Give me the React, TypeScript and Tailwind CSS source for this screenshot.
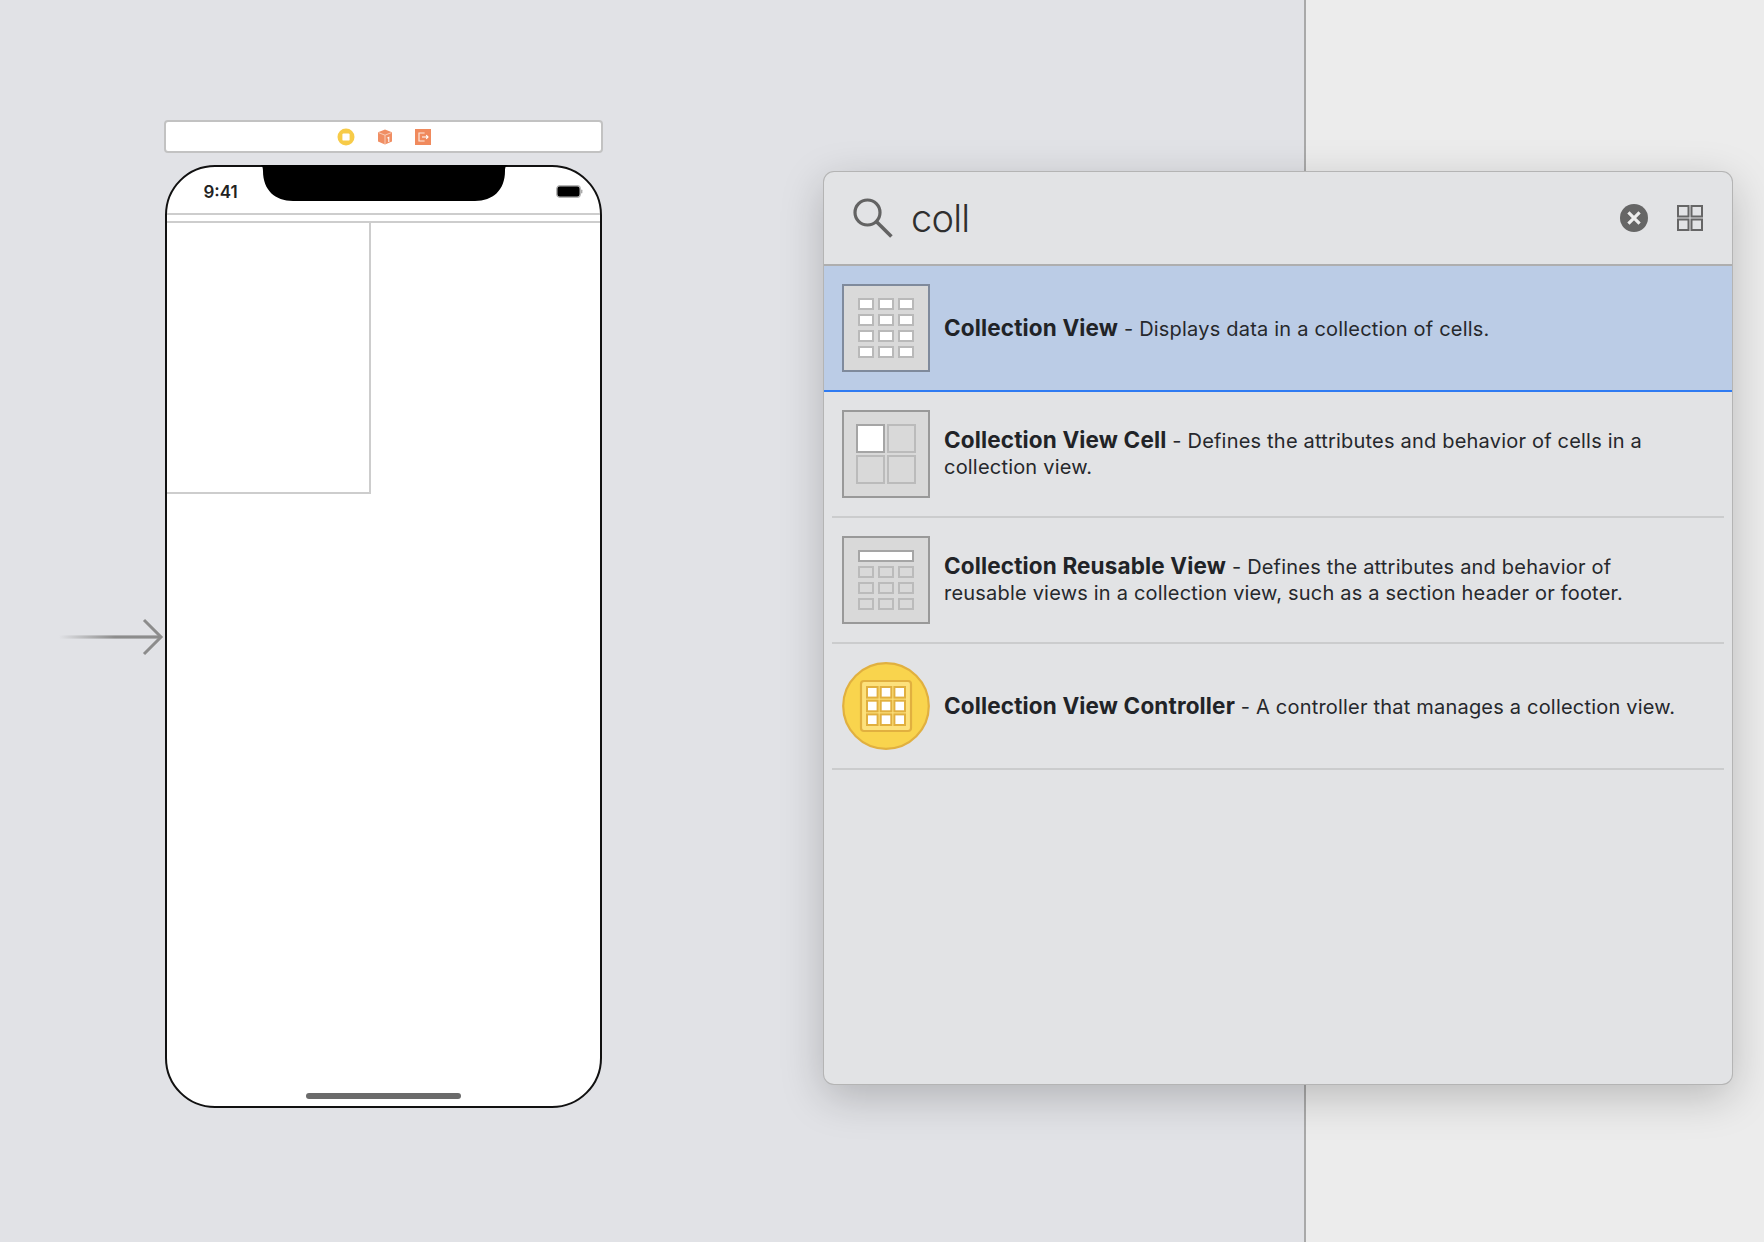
const CELL_X = [16, 36, 56];
const CELL_Y = [14, 30, 46, 62];

// Xcode library thumbnails
function CollectionViewIcon({ border }: { border: string }) {
  return (
    <svg width="88" height="88" viewBox="0 0 88 88" className="shrink-0">
      <rect x="1" y="1" width="86" height="86" fill="#d9d9d9" stroke={border} strokeWidth="2" />
      {CELL_Y.map((y) =>
        CELL_X.map((x) => (
          <rect key={`${x}-${y}`} x={x + 1} y={y + 1} width="14" height="10" fill="#fff" stroke="#b9b9b9" strokeWidth="2" />
        )),
      )}
    </svg>
  );
}

function CellIcon() {
  return (
    <svg width="88" height="88" viewBox="0 0 88 88" className="shrink-0">
      <rect x="1" y="1" width="86" height="86" fill="#d9d9d9" stroke="#999" strokeWidth="2" />
      <rect x="46" y="15" width="27" height="27" fill="none" stroke="#bbb" strokeWidth="2" />
      <rect x="15" y="46" width="27" height="27" fill="none" stroke="#bbb" strokeWidth="2" />
      <rect x="46" y="46" width="27" height="27" fill="none" stroke="#bbb" strokeWidth="2" />
      <rect x="15" y="15" width="27" height="27" fill="#fff" stroke="#a5a5a5" strokeWidth="2" />
    </svg>
  );
}

function ReusableIcon() {
  return (
    <svg width="88" height="88" viewBox="0 0 88 88" className="shrink-0">
      <rect x="1" y="1" width="86" height="86" fill="#d9d9d9" stroke="#999" strokeWidth="2" />
      <rect x="17" y="15" width="54" height="10" fill="#fff" stroke="#a5a5a5" strokeWidth="2" />
      {[30, 46, 62].map((y) =>
        CELL_X.map((x) => (
          <rect key={`${x}-${y}`} x={x + 1} y={y + 1} width="14" height="10" fill="none" stroke="#bbb" strokeWidth="2" />
        )),
      )}
    </svg>
  );
}

function ControllerIcon() {
  return (
    <svg width="88" height="88" viewBox="0 0 88 88" className="shrink-0">
      <circle cx="44" cy="44" r="42.8" fill="#f9d44d" stroke="#e1b03f" strokeWidth="2.2" />
      <rect x="19" y="19" width="50" height="50" rx="3" fill="#fde17c" stroke="#e1b03f" strokeWidth="2.2" />
      {[25, 38.7, 52.4].map((y) =>
        [25, 38.7, 52.4].map((x) => (
          <rect key={`${x}-${y}`} x={x} y={y} width="10.6" height="10.6" fill="#fff" stroke="#e1b03f" strokeWidth="2" />
        )),
      )}
    </svg>
  );
}

function SearchIcon() {
  return (
    <svg width="40" height="40" viewBox="0 0 40 40" className="shrink-0" fill="none" stroke="#636363">
      <circle cx="14.5" cy="14.5" r="12.5" strokeWidth="3.2" />
      <path d="M23.8 24 L38.4 38.6" strokeWidth="3.6" />
    </svg>
  );
}

function ClearIcon() {
  return (
    <svg width="28" height="28" viewBox="0 0 28 28" className="shrink-0">
      <circle cx="14" cy="14" r="14" fill="#666" />
      <path d="M8.4 8.4 L19.6 19.6 M19.6 8.4 L8.4 19.6" stroke="#eee" strokeWidth="3.2" />
    </svg>
  );
}

function GridIcon() {
  return (
    <svg width="26" height="26" viewBox="0 0 26 26" className="shrink-0" fill="none" stroke="#666" strokeWidth="2">
      <rect x="1" y="1" width="10.5" height="10.5" />
      <rect x="14.5" y="1" width="10.5" height="10.5" />
      <rect x="1" y="14.5" width="10.5" height="10.5" />
      <rect x="14.5" y="14.5" width="10.5" height="10.5" />
    </svg>
  );
}

function SceneDock() {
  return (
    <div className="flex h-[33px] w-[439px] items-center justify-center gap-[22px] rounded-[4px] border-2 border-[#c2c2c2] bg-white">
      <svg width="18" height="18" viewBox="0 0 18 18">
        <circle cx="9" cy="9" r="8.5" fill="#f7cb48" />
        <rect x="5.4" y="5.4" width="7.2" height="7.2" rx="1.2" fill="#fff" />
      </svg>
      <svg width="16" height="16" viewBox="0 0 16 16">
        <path d="M8 0.5 L15 3.2 V12.6 L8 15.5 L1 12.6 V3.2 Z" fill="#f08e63" />
        <path d="M1.5 3.6 L8 6.2 L14.5 3.6 M8 6.2 V15" fill="none" stroke="#f9d3c0" strokeWidth="0.9" />
        <path d="M10.4 9 L11.8 8.4 V13" fill="none" stroke="#fff" strokeWidth="1.1" />
      </svg>
      <svg width="16" height="16" viewBox="0 0 16 16">
        <rect width="16" height="16" fill="#f08a5d" />
        <path d="M9.6 4 H4 V12 H9.6" fill="none" stroke="#fde9df" strokeWidth="1.2" />
        <path d="M7 8 H13 M11.2 6.2 L13 8 L11.2 9.8" fill="none" stroke="#fff" strokeWidth="1.1" />
      </svg>
    </div>
  );
}

function Phone() {
  return (
    <div className="relative mt-[12px] flex h-[943px] w-[436.5px] flex-col rounded-[50px] border-2 border-[#111] bg-white">
      <svg width="250" height="37" viewBox="0 0 250 37" className="absolute left-[91.5px] top-[-2px]">
        <path d="M0 0 H250 C247 0 246 2 246 6 C246 25 234 36 216 36 H34 C16 36 4 25 4 6 C4 2 3 0 0 0 Z" fill="#000" />
      </svg>
      <div className="flex h-[46px] items-end justify-between pb-[9px] pl-[36.5px] pr-[17px]">
        <span className="text-[17px] font-semibold leading-[24px] text-[#222]">9:41</span>
        <svg width="27" height="13" viewBox="0 0 27 13" className="mb-[6px]">
          <rect x="0.8" y="0.8" width="23.4" height="11.4" rx="3" fill="#000" stroke="#b5b5b5" strokeWidth="1.4" />
          <rect x="25" y="4.5" width="1.4" height="4" rx="0.7" fill="#aaa" />
        </svg>
      </div>
      <div className="h-[10px] border-y-2 border-[#cdcdcd]" />
      <div className="h-[271px] w-[204px] border-r-2 border-b-2 border-[#cdcdcd]" />
      <div className="mt-auto mb-[7px] h-[6px] w-[155px] self-center rounded-full bg-[#6b6b6b]" />
    </div>
  );
}

type RowProps = {
  icon: React.ReactNode;
  title: string;
  desc: React.ReactNode;
  selected?: boolean;
  singleLine?: boolean;
};

function ResultRow({ icon, title, desc, selected, singleLine }: RowProps) {
  return (
    <div className={selected ? 'border-b-2 border-[#2f7bf2] bg-[#bbcce6]' : ''}>
      <div className="flex h-[124px] items-center gap-[14px] pl-[18px]">
        {icon}
        <p className={`text-[20px] leading-[26px] tracking-[0.2px] text-[#26282c] ${singleLine ? 'pt-[1px]' : 'pb-[2px]'}`}>
          <span className="text-[22.5px] font-bold tracking-[0.15px] text-[#212327]">{title}</span>
          {' - '}
          {desc}
        </p>
      </div>
      {!selected && <div className="mx-2 h-[2px] bg-[#cbcccd]" />}
    </div>
  );
}

function LibraryPanel() {
  return (
    <div className="absolute left-[824px] top-[172px] h-[912px] w-[908px] overflow-hidden rounded-[10px] bg-[#e2e3e5] shadow-[0_0_0_1px_#b4b4b4,0_12px_44px_rgba(0,0,0,0.22)]">
      <div className="flex h-[94px] items-center border-b-2 border-[#aeaeae] pl-[29px] pr-[29px]">
        <SearchIcon />
        <span className="ml-[18px] flex-1 text-[38px] font-light leading-none tracking-[-0.8px] text-[#2f2f2f]">coll</span>
        <ClearIcon />
        <div className="ml-[29px]">
          <GridIcon />
        </div>
      </div>
      <ResultRow
        selected
        singleLine
        icon={<CollectionViewIcon border="#7f8a9c" />}
        title="Collection View"
        desc="Displays data in a collection of cells."
      />
      <ResultRow
        icon={<CellIcon />}
        title="Collection View Cell"
        desc={<>Defines the attributes and behavior of cells in a<br />collection view.</>}
      />
      <ResultRow
        icon={<ReusableIcon />}
        title="Collection Reusable View"
        desc={<>Defines the attributes and behavior of<br />reusable views in a collection view, such as a section header or footer.</>}
      />
      <ResultRow
        singleLine
        icon={<ControllerIcon />}
        title="Collection View Controller"
        desc="A controller that manages a collection view."
      />
    </div>
  );
}

export default function App() {
  return (
    <div className="relative flex h-[1242px] w-[1764px] overflow-hidden font-['Inter',sans-serif]">
      <div className="relative w-[1304px] shrink-0 bg-[#e1e2e6] pl-[164px] pt-[120px]">
        <SceneDock />
        <div className="pl-[1px]">
          <Phone />
        </div>
        <svg width="110" height="40" viewBox="0 0 110 40" className="absolute left-[56px] top-[617px]">
          <defs>
            <linearGradient id="entry" x1="0" x2="1" y1="0" y2="0">
              <stop offset="0" stopColor="#8c8c8c" stopOpacity="0" />
              <stop offset="0.55" stopColor="#8c8c8c" />
              <stop offset="1" stopColor="#8c8c8c" />
            </linearGradient>
          </defs>
          <rect x="3" y="18.4" width="102" height="3.2" fill="url(#entry)" />
          <path d="M88 3 L105 20 L88 37" fill="none" stroke="#8c8c8c" strokeWidth="3" />
        </svg>
      </div>
      <div className="flex-1 border-l-2 border-[#a9a9a9] bg-[#ececec]" />
      <LibraryPanel />
    </div>
  );
}
